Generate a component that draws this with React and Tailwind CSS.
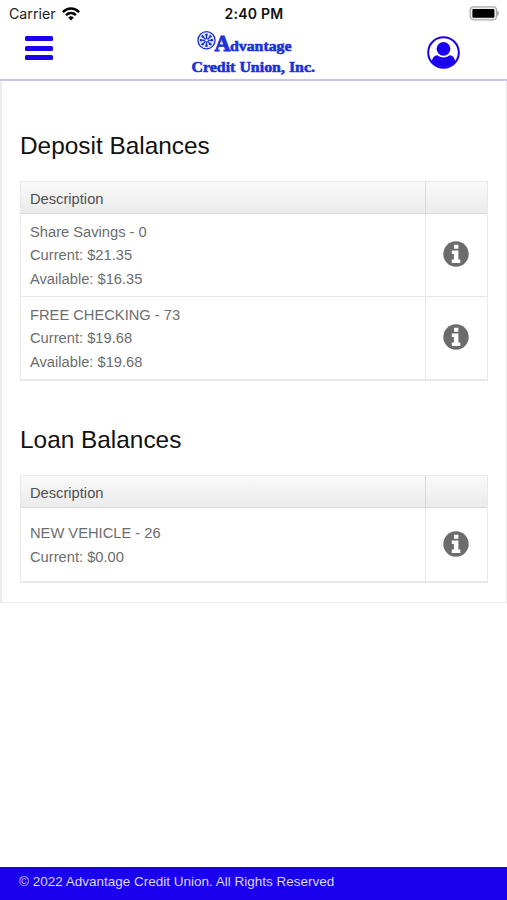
import React from "react";

const deposits = [
  ["Share Savings - 0", "Current: $21.35", "Available: $16.35"],
  ["FREE CHECKING - 73", "Current: $19.68", "Available: $19.68"],
];
const loans = [["NEW VEHICLE - 26", "Current: $0.00"]];

function StatusBar() {
  return (
    <div className="flex h-7 items-center justify-between pl-[9px] pr-[8px] font-['Inter',sans-serif] text-[#111]">
      <div className="flex flex-1 items-center gap-[6px] text-[14.2px] leading-none text-[#222]">
        <span>Carrier</span>
        <svg width="18" height="14" viewBox="0 0 18 14" fill="none" stroke="#000" strokeWidth="2.5">
          <path d="M0.9 5.1C5.6.4 12.4.4 17.1 5.1" />
          <path d="M4 8.2C7 5.4 11 5.4 14 8.2" />
          <path d="M6.2 10.4 9 13.4 11.8 10.4Q9 8.3 6.2 10.4Z" fill="#000" stroke="none" />
        </svg>
      </div>
      <span className="text-[14px] font-semibold leading-none tracking-[0.25px]">2:40 PM</span>
      <div className="flex flex-1 justify-end">
        <svg width="31" height="15" viewBox="0 0 31 15" className="relative left-px -top-px">
          <rect x="1.2" y="0.8" width="26.4" height="13" rx="3.5" fill="#eee" stroke="#aaa" strokeWidth="1.2" />
          <rect x="3.4" y="3" width="22" height="8.8" rx="1" fill="#000" />
          <path d="M28.5 5v4.6Q31 7.3 28.5 5Z" fill="#999" stroke="#999" strokeWidth="0.5" />
        </svg>
      </div>
    </div>
  );
}

function Logo() {
  return (
    <svg width="130" height="48" viewBox="0 0 130 48" fill="#1a32d6" className="font-['Liberation_Serif',serif] font-bold">
      <circle cx="16.5" cy="12.3" r="8.6" fill="#dfe3fc" stroke="#1a32d6" strokeWidth="1.3" />
      <g stroke="#1a32d6" strokeWidth="1.3">
        {[0, 45, 90, 135, 180, 225, 270, 315].map((a) => (
          <g key={a} transform={`rotate(${a} 16.5 12.3)`}>
            <path d="M16.5 12.3V6" />
            <circle cx="16.5" cy="6.8" r="0.6" />
          </g>
        ))}
      </g>
      <circle cx="16.5" cy="12.3" r="1.2" fill="#fff" />
      <g stroke="#1a32d6" strokeWidth="0.6">
        <text x="24.5" y="23.3" fontSize="24" strokeWidth="1" textLength="16" lengthAdjust="spacingAndGlyphs">A</text>
        <text x="40" y="23.3" fontSize="15" textLength="61.5" lengthAdjust="spacingAndGlyphs">dvantage</text>
        <text x="1.5" y="43.6" fontSize="15" textLength="123.5" lengthAdjust="spacingAndGlyphs">Credit Union, Inc.</text>
      </g>
    </svg>
  );
}

function Header() {
  return (
    <header className="flex h-[53px] justify-between border-b-2 border-[#c8c3f1] pl-[25px] pr-[47px]">
      <button aria-label="Menu" className="mt-[8px] flex h-[24px] w-[28px] flex-col justify-between">
        <span className="h-[5px] w-full rounded-[1.5px] bg-[#1a00ee]" />
        <span className="h-[5px] w-full rounded-[1.5px] bg-[#1a00ee]" />
        <span className="h-[5px] w-full rounded-[1.5px] bg-[#1a00ee]" />
      </button>
      <div className="ml-[29px]"><Logo /></div>
      <button aria-label="Profile" className="mt-[8px] h-[33px] w-[33px]">
        <svg width="33" height="33" viewBox="0 0 33 33" fill="#1a00ee">
          <circle cx="16.5" cy="16.5" r="15.3" fill="none" stroke="#1a00ee" strokeWidth="2" />
          <circle cx="16.5" cy="12.8" r="6.9" />
          <path d="M4.8 25.5C5.2 21.7 7.3 19.5 10.3 19.2Q16.5 23.6 22.7 19.2C25.7 19.5 27.8 21.7 28.2 25.5A15 15 0 0 1 4.8 25.5Z" />
        </svg>
      </button>
    </header>
  );
}

function InfoIcon() {
  return (
    <svg width="26" height="26" viewBox="0 0 26 26">
      <circle cx="13" cy="13" r="12.7" fill="#6c6c6c" />
      <path d="M11 3.8h4.4v4H11ZM8.8 9.4h6.6v9h1.9v3.5H8.8v-3.5h2.1v-5.5H8.8Z" fill="#fff" />
    </svg>
  );
}

function BalanceTable({ rows, rowClass }) {
  return (
    <div className="border border-b-2 border-[#e9e9e9] text-[14.7px]">
      <div className="flex h-[32px] border-b border-[#d9d9d9] bg-linear-to-b from-[#f9f9f9] to-[#ebebeb] text-[#505050]">
        <div className="flex flex-1 items-center pl-[9px] pt-[3px]">Description</div>
        <div className="w-[62px] border-l border-[#d8d8d8]" />
      </div>
      {rows.map((lines) => (
        <div key={lines[0]} className={`flex border-[#e8e8e8] not-last:border-b ${rowClass}`}>
          <div className="flex flex-1 flex-col justify-center pl-[9px] pt-[2px] leading-[23.3px] text-[#6d6d6d]">
            {lines.map((line) => (
              <p key={line}>{line}</p>
            ))}
          </div>
          <div className="flex w-[62px] items-center justify-center border-l border-[#e6e6e6] pb-[2px] pr-px">
            <InfoIcon />
          </div>
        </div>
      ))}
    </div>
  );
}

function Section({ title, children }) {
  return (
    <section>
      <h2 className="mb-[19px] h-[32px] text-[24.4px] leading-[31px] text-[#111]">{title}</h2>
      {children}
    </section>
  );
}

export default function App() {
  return (
    <div className="flex h-[900px] w-full flex-col overflow-hidden bg-white font-['Liberation_Sans',Arial,sans-serif]">
      <StatusBar />
      <Header />
      <main className="flex h-[522px] flex-col gap-[43px] border border-t-0 border-l-2 border-[#ebebeb] pl-[18px] pr-[18px] pt-[49px]">
        <Section title="Deposit Balances">
          <BalanceTable rows={deposits} rowClass="h-[83px] last:h-[82px]" />
        </Section>
        <Section title="Loan Balances">
          <BalanceTable rows={loans} rowClass="h-[73px]" />
        </Section>
      </main>
      <footer className="mt-auto flex h-[33px] items-center bg-[#1a00ee] pb-[2px] pl-[19px] text-[13.5px] text-[#dcd8ff]">
        © 2022 Advantage Credit Union. All Rights Reserved
      </footer>
    </div>
  );
}
